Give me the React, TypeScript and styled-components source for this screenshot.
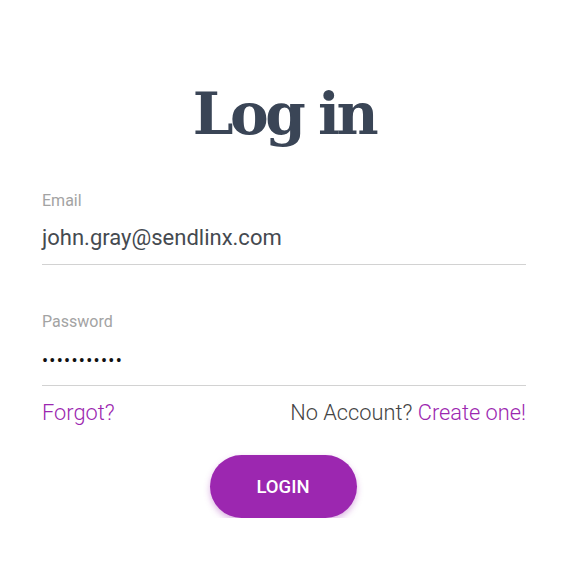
import React from 'react';
import styled, { createGlobalStyle } from 'styled-components';

const GlobalStyle = createGlobalStyle`
  body {
    margin: 0;
    background: #ffffff;
    font-family: Roboto, "Liberation Sans", sans-serif;
  }
`

const Page = styled.div`
  width: 566px;
  padding: 78px 40px 0 42px;
  box-sizing: border-box;
  display: flex;
  flex-direction: column;
`

const Title = styled.h1`
  margin: 0 0 42px;
  text-align: center;
  font-family: "DejaVu Serif", "Liberation Serif", serif;
  font-weight: 700;
  font-size: 58px;
  line-height: 72px;
  letter-spacing: -3.5px;
  word-spacing: -1px;
  color: #3a4556;
`

type FieldProps = {
  last?: boolean
}

const Field = styled.div<FieldProps>`
  display: flex;
  flex-direction: column;
  border-bottom: 1px solid #d2d2d2;
  margin-bottom: ${({ last }): string => (last ? '0' : '48px')};
`

const Label = styled.label`
  font-size: 16px;
  line-height: 18px;
  color: #a3a3a3;
`

const Value = styled.div`
  font-size: 22px;
  line-height: 28px;
  color: #454a50;
  padding: 14px 0 12px;
`

const Dots = styled.div`
  font-size: 18px;
  letter-spacing: 1.3px;
  line-height: 28px;
  color: #111;
  padding: 16px 0 10px;
`

const LinksRow = styled.div`
  display: flex;
  justify-content: space-between;
  align-items: center;
  margin-top: 14px;
  font-size: 21.8px;
  font-weight: 300;
  line-height: 26px;
  color: #444;
`

const Link = styled.a`
  color: #9c27b0;
  text-decoration: none;
  cursor: pointer;
`

const ButtonRow = styled.div`
  display: flex;
  justify-content: center;
  margin-top: 29px;
  padding-right: 2px;
`

const LoginButton = styled.button`
  width: 147px;
  height: 63px;
  border: none;
  border-radius: 32px;
  background: #9c27b0;
  color: #fff;
  font-family: Roboto, "Liberation Sans", sans-serif;
  font-size: 18.5px;
  font-weight: 500;
  box-shadow: 0 3px 6px rgba(156, 39, 176, 0.35);
  cursor: pointer;
`

export default function App(): JSX.Element {
  return (
    <>
      <GlobalStyle />
      <Page>
        <Title>Log in</Title>
        <Field>
          <Label>Email</Label>
          <Value>john.gray@sendlinx.com</Value>
        </Field>
        <Field last>
          <Label>Password</Label>
          <Dots>{'•'.repeat(11)}</Dots>
        </Field>
        <LinksRow>
          <Link>Forgot?</Link>
          <span>
            No Account? <Link>Create one!</Link>
          </span>
        </LinksRow>
        <ButtonRow>
          <LoginButton>LOGIN</LoginButton>
        </ButtonRow>
      </Page>
    </>
  )
}
